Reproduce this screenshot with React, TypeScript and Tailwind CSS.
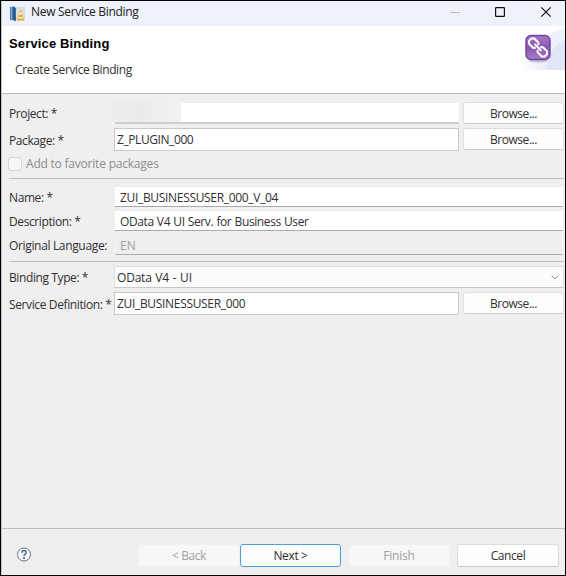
import type { ReactNode } from 'react';

function Row({ className, label, labelClass = '', children }: { className: string; label: string; labelClass?: string; children: ReactNode }) {
  return (
    <div className={`flex shrink-0 items-stretch ${className}`}>
      <label className={`w-[106px] shrink-0 whitespace-nowrap leading-[22px] ${labelClass}`}>{label}</label>
      {children}
    </div>
  );
}

function Browse() {
  return (
    <button className="ml-1 h-[22px] w-[101px] shrink-0 rounded-[3px] border border-[#dedede] border-b-[#cbcbcb] bg-[#fdfdfd] pt-px leading-[20px] tracking-[-0.45px]">
      Browse...
    </button>
  );
}

function Divider({ className }: { className: string }) {
  return <div className={`h-px shrink-0 bg-[#bdbdbd] ${className}`} />;
}

function AppIcon() {
  return (
    <svg width="16" height="16" viewBox="0 0 16 16">
      <path d="M0 1 5 .5v14L0 14Z" fill="#3d78ae" />
      <path d="M1.500 1v13" stroke="#86b2d8" />
      <path d="M5 .500 15 1v13.500H5Z" fill="#dcdcda" />
      <path d="M3.500.500 5.800 2.500v13l-2.300-2Z" fill="#1e5286" />
      <path d="M10.500 3 11.800 7l2.500 7.500H6.700L9.300 7Z" fill="#e9ab3c" />
      <path d="m9.500 6.500 2 0 .5 2.200H9ZM8.300 11h4.500l.6 1.500H7.800Z" fill="#fff1c8" />
    </svg>
  );
}

function LinkBadge() {
  return (
    <svg width="44" height="44" viewBox="0 0 44 44">
      <defs>
        <linearGradient id="badge" x1="0" y1="0" x2="0" y2="1">
          <stop offset="0" stopColor="#a778c5" />
          <stop offset=".5" stopColor="#8d57b3" />
          <stop offset="1" stopColor="#a47bc7" />
        </linearGradient>
        <linearGradient id="swoosh" x1="0" y1="0" x2="1" y2="0">
          <stop offset="0" stopColor="#fff" />
          <stop offset=".5" stopColor="#ebeffa" />
          <stop offset="1" stopColor="#eef2fb" />
        </linearGradient>
      </defs>
      <path d="M0 44C9 20 24 8 44 2v42Z" fill="url(#swoosh)" />
      <path d="M26 44C27 28 33 19 44 13v31Z" fill="#d9e1f5" opacity=".75" />
      <ellipse cx="17" cy="34.500" rx="10" ry="2" fill="#8d829a" opacity=".4" />
      <rect x="5" y="9.5" width="24" height="24" rx="5" fill="url(#badge)" stroke="#70439d" strokeWidth="1.4" />
      <g fill="none" stroke="#fff" strokeWidth="1.900" transform="rotate(45 17 21.5)">
        <path d="M14 17.800H8L6 19.700v3.600L8 25.200h6l1.700-2M15.700 19.800l-1.700-2" />
        <path d="M20 17.800H26l2 1.900v3.600l-2 1.900H20L18.300 23.200M18.300 19.800l1.700-2" />
        <path d="M12 21.500h10" />
      </g>
    </svg>
  );
}

export default function App() {
  return (
    <div className="flex h-[576px] w-[566px] flex-col overflow-hidden border border-black bg-[#efefef] font-['Open_Sans','Noto_Sans',sans-serif] text-[12px] text-[#303030]">
      <header className="flex h-[25px] shrink-0 items-center border-l border-[#c5c5c5] bg-[#eef2fa] pl-2">
        <AppIcon />
        <span className="ml-[5px] mt-[-3px] whitespace-nowrap leading-4 tracking-[-0.31px] text-[#202020]">New Service Binding</span>
        <svg className="ml-auto mt-[-3px]" width="120" height="16" viewBox="0 0 120 16" fill="none" stroke="#111">
          <path d="M5 8.5h10" stroke="#bcbcbc" />
          <rect x="50.6" y="3.6" width="8.8" height="8.8" rx=".5" strokeWidth="1.2" />
          <path d="m96.3 3.3 9.4 9.4M105.700 3.300l-9.400 9.400" strokeWidth="1.15" />
        </svg>
      </header>

      <section className="flex h-[68px] shrink-0 justify-between border-b border-l border-b-[#bababa] border-l-[#c5c5c5] bg-white">
        <div>
          <h1 className="mt-[10px] whitespace-nowrap pl-[7px] font-['Liberation_Sans',Arial,sans-serif] text-[13px] font-bold leading-4 tracking-[0.15px] text-black">Service Binding</h1>
          <p className="mt-[10px] whitespace-nowrap pl-[13px] leading-4 tracking-[-0.38px]">Create Service Binding</p>
        </div>
        <LinkBadge />
      </section>

      <main className="flex h-[435px] shrink-0 flex-col border-b border-l border-b-[#bebebe] border-l-[#c5c5c5] pl-[7px] pr-[1px] pt-[8px]">
        <Row className="h-[22px]" label="Project: *" labelClass="tracking-[-0.4px] pt-px">
          <div className="mt-px h-[21px] w-[344px] border-b-2 border-[#cecece] bg-white">
            <div className="ml-[-18px] mt-[-2px] h-[21px] w-[84px] bg-linear-to-r from-[#efefef] via-[#ebebeb] to-[#f2f2f2]" />
          </div>
          <Browse />
        </Row>
        <Row className="mt-1 h-[23px]" label="Package: *" labelClass="tracking-[-0.4px] pt-[2px]">
          <div className="ml-[-1px] h-[23px] w-[345px] border border-[#c9c9c9] bg-white pl-[2px] leading-[22px]">
            <span className="tracking-[-0.42px]">Z_PLUGIN_000</span>
          </div>
          <Browse />
        </Row>
        <label className="mt-[5px] flex h-[15px] shrink-0 items-center whitespace-nowrap text-[#8c8c8c]">
          <span className="ml-[-1px] size-[14px] shrink-0 rounded-[3px] border border-[#d5d5d5] bg-[#f7f7f7]" />
          <span className="ml-1 tracking-[-0.21px]">Add to favorite packages</span>
        </label>
        <Divider className="mt-[7px]" />
        <Row className="mr-px mt-2 h-5" label="Name: *" labelClass="tracking-[-0.4px]">
          <div className="h-5 flex-1 whitespace-nowrap border-b border-[#aaa] bg-white pl-[5px] leading-[21px]">
            <span className="tracking-[-0.32px]">ZUI_BUSINESSUSER_000_V_04</span>
          </div>
        </Row>
        <Row className="mr-px mt-1 h-5" label="Description: *" labelClass="tracking-[-0.4px]">
          <div className="h-5 flex-1 whitespace-nowrap border-b border-[#aaa] bg-white pl-[5px] leading-[21px]">
            <span className="tracking-[-0.4px] [word-spacing:0.5px]">OData V4 UI Serv. for Business User</span>
          </div>
        </Row>
        <Row className="mr-px mt-1 h-5" label="Original Language:" labelClass="tracking-[-0.34px]">
          <div className="h-5 flex-1 border border-[#f3f3f3] border-b-[#aaa] bg-[#eeeeee] pl-1 leading-[20px] text-[#a0a0a0]">EN</div>
        </Row>
        <Divider className="mt-[6px]" />
        <Row className="mt-1 h-[22px]" label="Binding Type: *" labelClass="tracking-[-0.4px] pt-px">
          <div className="ml-[-1px] flex h-[22px] flex-1 items-center justify-between border border-[#dedede] border-b-[#c8c8c8] bg-[#fcfcfc] pl-[2px] pr-1">
            <span className="pt-px tracking-[-0.2px] [word-spacing:0.8px]">OData V4 - UI</span>
            <svg width="8" height="5" viewBox="0 0 8 5" fill="none" stroke="#858585"><path d="m.8.7 3.200 3.200L7.200.7" /></svg>
          </div>
        </Row>
        <Row className="mt-1 h-[23px]" label="Service Definition: *" labelClass="tracking-[-0.38px] pt-[2px]">
          <div className="ml-[-1px] h-[23px] w-[345px] border border-[#c9c9c9] bg-white pl-[2px] leading-[21px]">
            <span className="tracking-[-0.32px]">ZUI_BUSINESSUSER_000</span>
          </div>
          <Browse />
        </Row>
      </main>

      <footer className="flex flex-1 items-start border-l border-[#c5c5c5] pl-[15px] pt-[15px]">
        <svg className="mt-[3px]" width="15" height="15" viewBox="0 0 15 15" fill="none" stroke="#65758e">
          <circle cx="7" cy="7.500" r="6.500" fill="#f7f9fc" strokeWidth="1" />
          <path d="M4.800 5.800c0-3 4.600-2.800 4.400-.2C9 7 7.200 7.200 7 9" strokeWidth="1.700" />
          <path d="M7 10v2" strokeWidth="1.800" />
        </svg>
        <button className="ml-[107px] mt-px h-[21px] w-[100px] rounded-[3px] bg-[#f7f7f7] pt-px leading-[20px] tracking-[-0.4px] text-[#a0a0a0]">&lt; Back</button>
        <button className="ml-px h-[23px] w-[101px] rounded-[3px] border border-[#4d9fdc] bg-[#fdfdfd] pt-px leading-[20px] tracking-[-0.35px]">Next &gt;</button>
        <button className="ml-2 mt-px h-[21px] w-[100px] rounded-[3px] bg-[#f7f7f7] pt-px leading-[20px] tracking-[-0.2px] text-[#a0a0a0]">Finish</button>
        <button className="ml-2 h-[23px] w-[102px] rounded-[3px] border border-[#dcdcdc] border-b-[#cacaca] bg-[#fdfdfd] pt-px leading-[20px] tracking-[-0.4px]">Cancel</button>
      </footer>
    </div>
  );
}
